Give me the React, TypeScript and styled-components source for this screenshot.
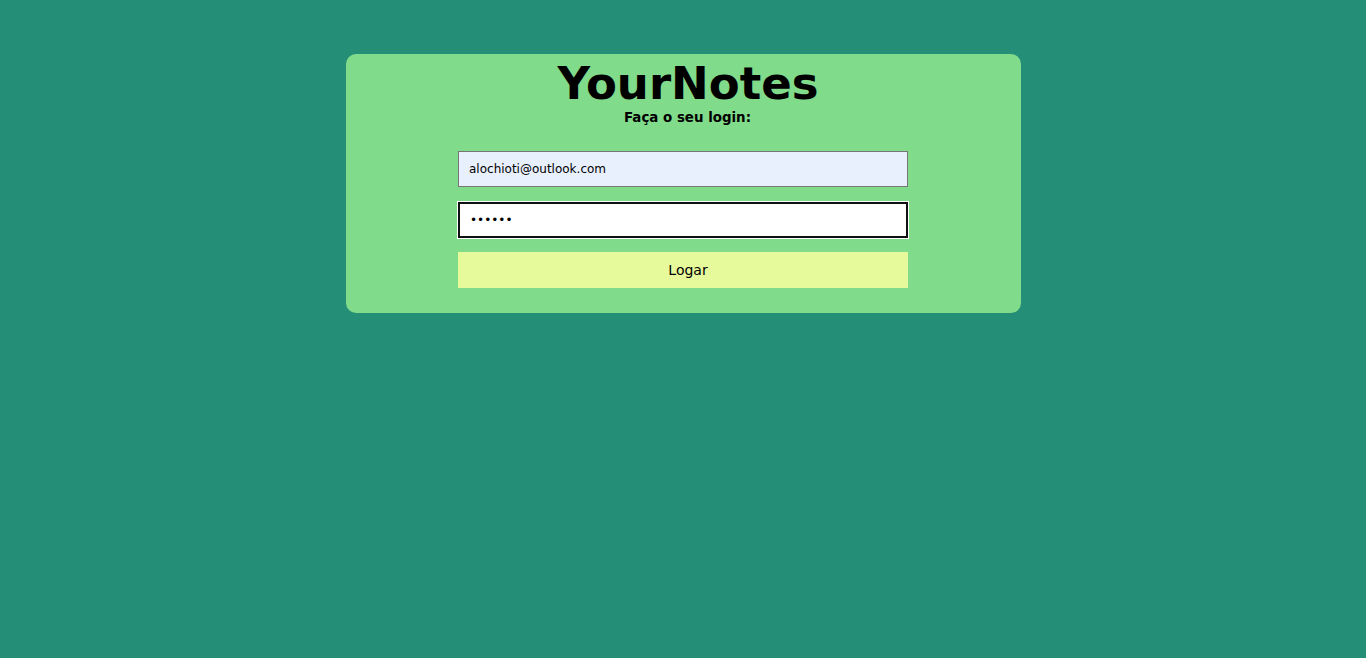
import React, { useState } from 'react';
import styled, { createGlobalStyle } from 'styled-components';

const GlobalStyle = createGlobalStyle`
  html, body {
    margin: 0;
    padding: 0;
    background: #248f76;
    font-family: "DejaVu Sans", Verdana, sans-serif;
  }
`;

const Page = styled.main`
  min-height: 658px;
  display: flex;
  justify-content: center;
  align-items: flex-start;
  padding-top: 54px;
  box-sizing: border-box;
`;

const Card = styled.section`
  width: 675px;
  box-sizing: border-box;
  background: #80db8a;
  border-radius: 10px;
  padding: 4px 0 25px;
  display: flex;
  flex-direction: column;
  align-items: center;
`;

const Title = styled.h1`
  margin: 0;
  padding-left: 10px;
  font-size: 45px;
  font-weight: bold;
  line-height: 52px;
  color: #000;
`;

const Subtitle = styled.h2`
  margin: 0 0 25px;
  padding-left: 9px;
  font-size: 13.4px;
  font-weight: bold;
  line-height: 16px;
  color: #000;
`;

const Form = styled.form`
  width: 450px;
  display: flex;
  flex-direction: column;
  gap: 15px;
`;

const Input = styled.input<{ $filled?: boolean; $focused?: boolean }>`
  height: 36px;
  box-sizing: border-box;
  padding: 0 10px;
  font-family: "DejaVu Sans", Verdana, sans-serif;
  font-size: 12px;
  color: #000;
  background: ${(p) => (p.$filled ? '#e8f0fe' : '#fff')};
  border: ${(p) => (p.$focused ? '2px solid #111' : '1px solid #767676')};
  outline: ${(p) => (p.$focused ? '1px solid #fff' : 'none')};
  border-radius: 0;
`;

const Button = styled.button`
  height: 36px;
  margin-top: -1px;
  padding-left: 16px;
  border: none;
  background: #e6f99b;
  font-family: "DejaVu Sans", Verdana, sans-serif;
  font-size: 14px;
  color: #000;
  cursor: pointer;
`;

const App: React.FC = () => {
  const [email, setEmail] = useState('alochioti@outlook.com');
  const [password, setPassword] = useState('123456');

  return (
    <>
      <GlobalStyle />
      <Page>
        <Card>
          <Title>YourNotes</Title>
          <Subtitle>Faça o seu login:</Subtitle>
          <Form onSubmit={(e) => e.preventDefault()}>
            <Input
              $filled
              type="email"
              value={email}
              onChange={(e) => setEmail(e.target.value)}
            />
            <Input
              $focused
              type="password"
              value={password}
              onChange={(e) => setPassword(e.target.value)}
            />
            <Button type="submit">Logar</Button>
          </Form>
        </Card>
      </Page>
    </>
  );
};

export default App;
